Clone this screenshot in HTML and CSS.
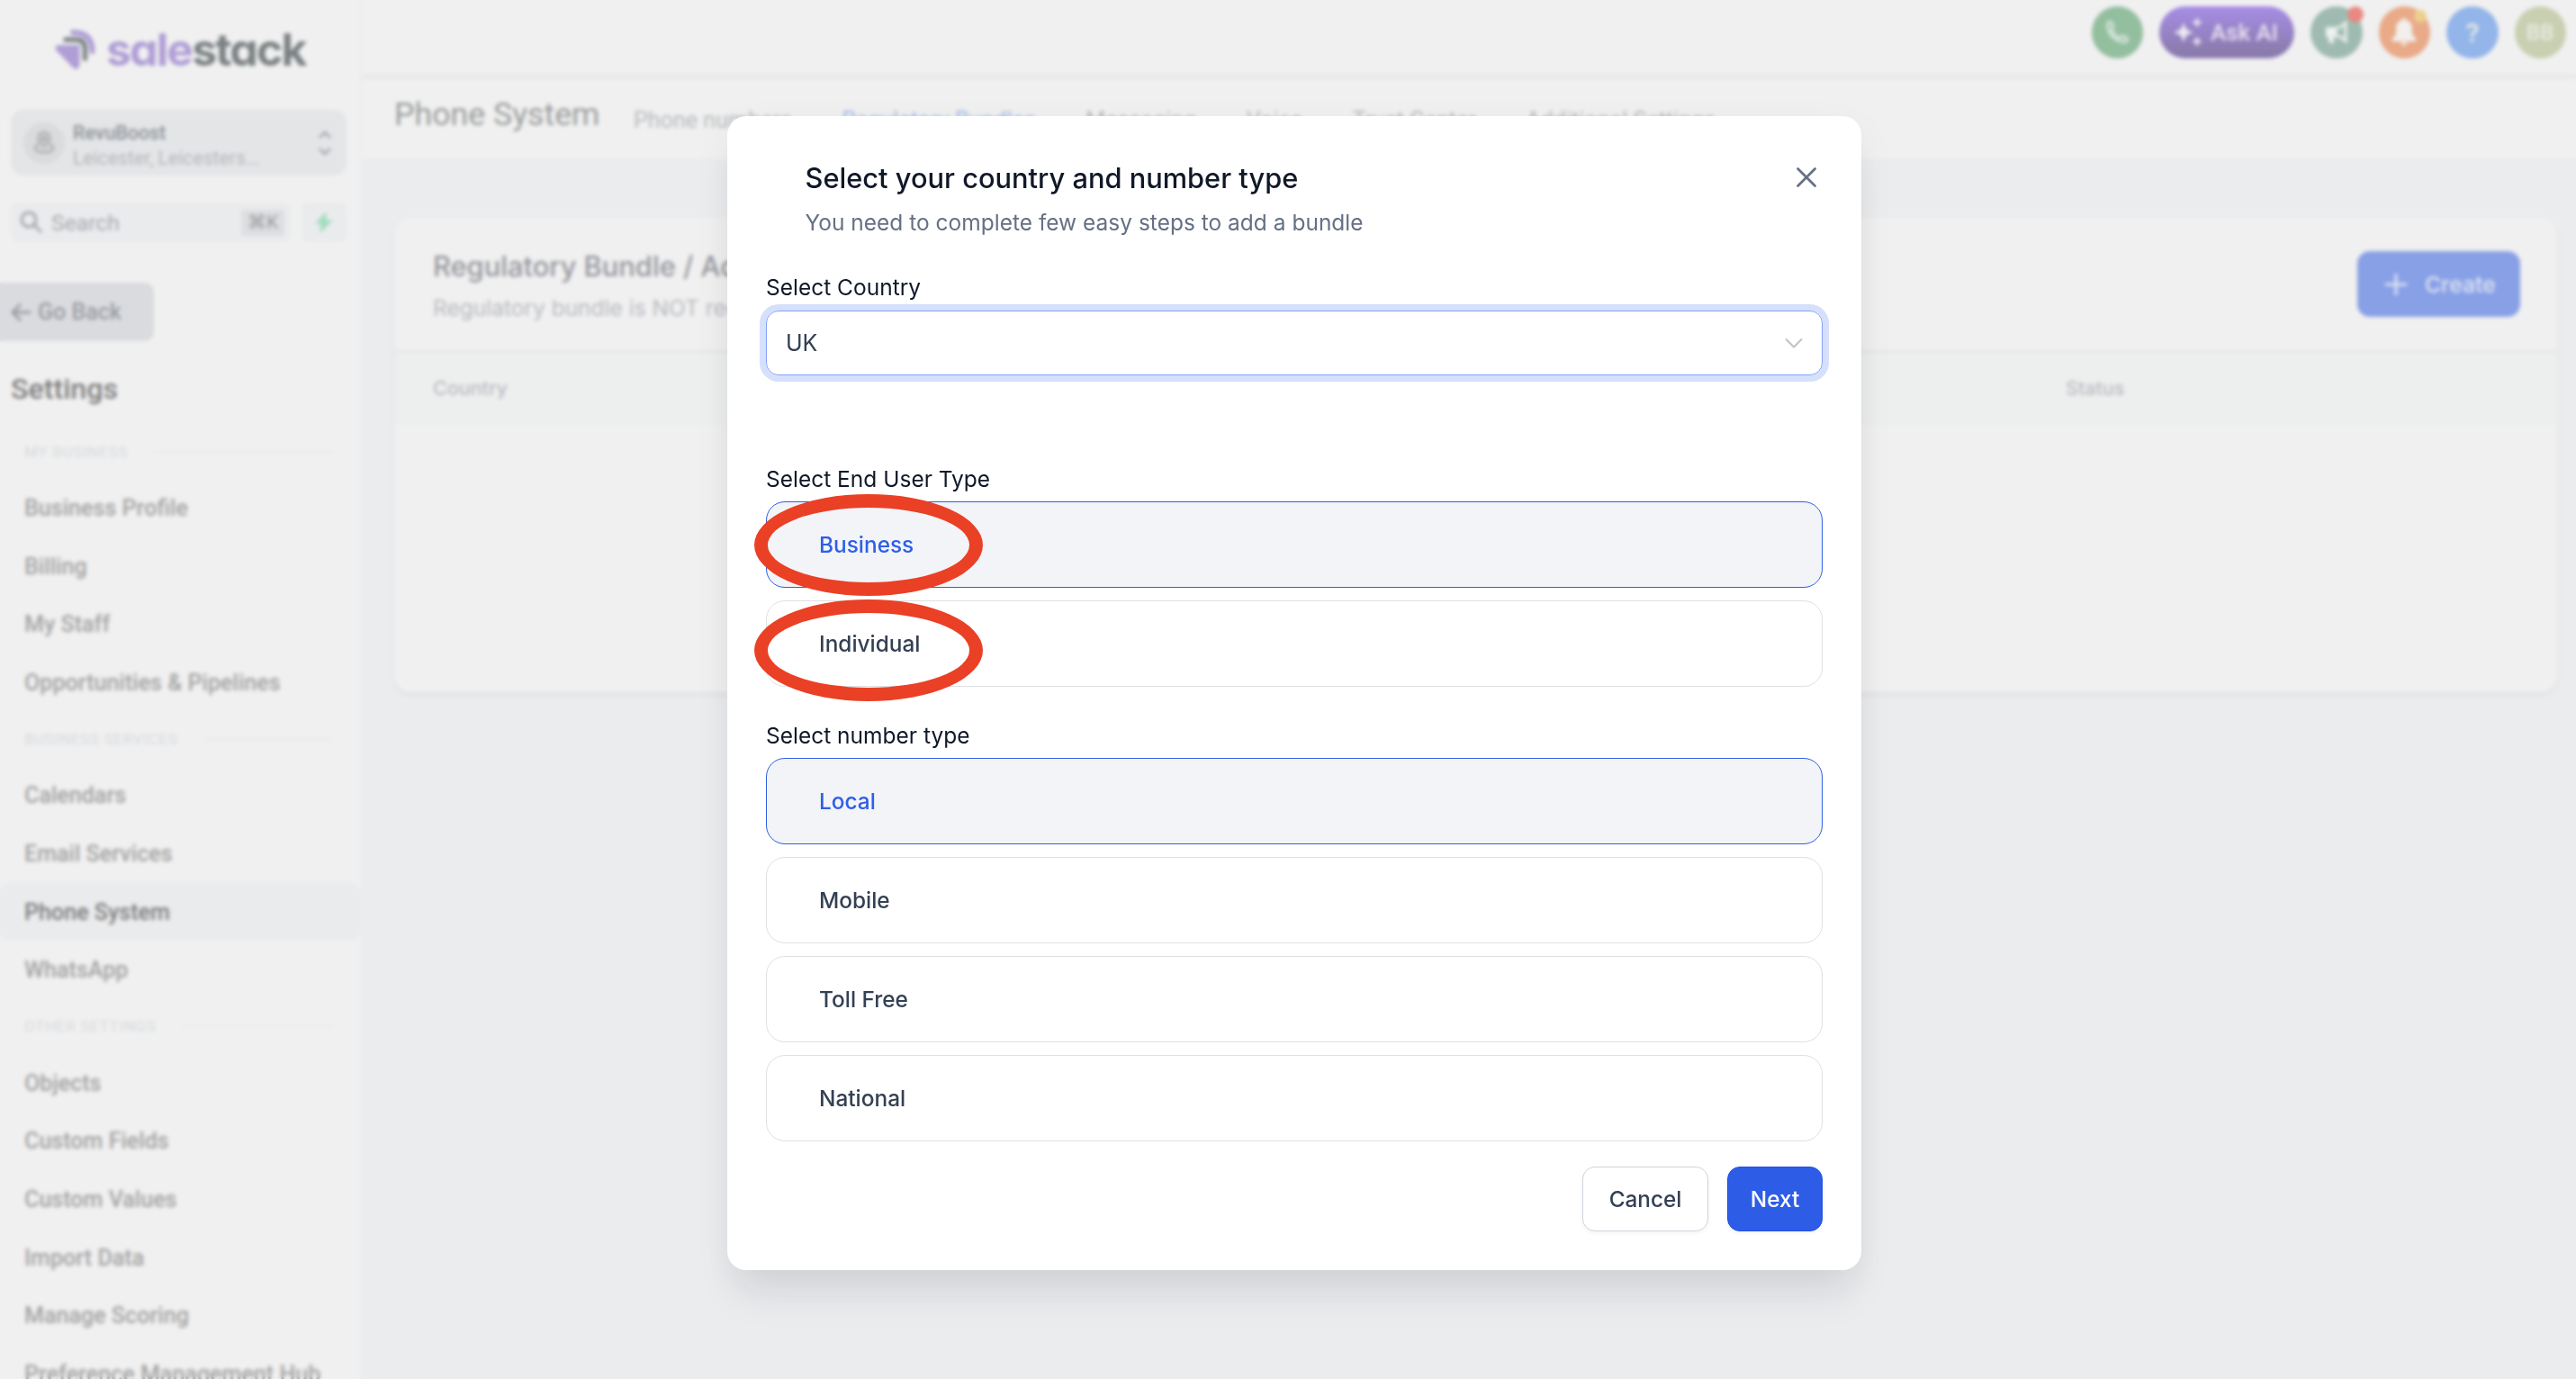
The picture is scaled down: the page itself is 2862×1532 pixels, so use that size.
FILE: index.html
```
<!DOCTYPE html>
<html lang="en">
<head>
    <meta charset="UTF-8">
    <meta name="viewport" content="width=device-width, initial-scale=1.0">
    <title>Phone System - Regulatory Bundles</title>
    <link rel="stylesheet" href="styles.css">
</head>
<body>
    <div class="app">
        <!-- Sidebar -->
        <aside class="sidebar">
            <div class="logo">
                <svg width="46" height="48" viewBox="0 0 46 48">
                    <path d="M3.500 20.500h22.500v21q-1 4-4.500 2L2.500 24q-1-2.500 1-3.500z" fill="#af9dd6" stroke="#af9dd6" stroke-width="3" stroke-linejoin="round"/>
                    <path d="M12 13h11q10.500 0 10.500 10.500v10.500" fill="none" stroke="#808688" stroke-width="5.500" stroke-linecap="round"/>
                    <path d="M20 5q21.500 0 21.500 21" fill="none" stroke="#af9dd6" stroke-width="6" stroke-linecap="round"/>
                </svg>
                <span class="logo-text">sale<b>stack</b></span>
            </div>

            <div class="account">
                <div class="account-icon">
                    <svg width="24" height="26" viewBox="0 0 24 26" fill="none" stroke="#a9a9a9" stroke-width="2.400">
                        <path d="M12 17c-4-4-6.500-6-6.500-9.500a6.500 6.500 0 0 1 13 0C18.500 11 16 13 12 17z"/>
                        <circle cx="12" cy="8" r="2"/>
                        <path d="M6 14.500c-6 2-6 8.500 6 8.500s12-6.500 6-8.500"/>
                    </svg>
                </div>
                <div class="account-info">
                    <div class="account-name">RevuBoost</div>
                    <div class="account-place">Leicester, Leicesters...</div>
                </div>
                <svg width="16" height="28" viewBox="0 0 16 28" fill="none" stroke="#a4a7ac" stroke-width="2.500">
                    <path d="M2 8l6-6 6 6M2 20l6 6 6-6"/>
                </svg>
            </div>

            <div class="search-row">
                <div class="search">
                    <svg width="26" height="26" viewBox="0 0 26 26" fill="none" stroke="#a3a6ad" stroke-width="3">
                        <circle cx="10" cy="10" r="8"/><path d="M16 16l8 8"/>
                    </svg>
                    <span>Search</span>
                    <kbd>⌘K</kbd>
                </div>
                <div class="bolt">
                    <svg width="20" height="24" viewBox="0 0 20 24"><path d="M12 1L1 13h6l-1 10L19 10h-7z" fill="#a3dcbf" stroke="#a3dcbf"/></svg>
                </div>
            </div>

            <div class="go-back">
                <svg width="22" height="20" viewBox="0 0 22 20" fill="none" stroke="#989ba1" stroke-width="3"><path d="M22 10H3M11 1l-9 9 9 9"/></svg>
                <span>Go Back</span>
            </div>

            <h2 class="settings-title">Settings</h2>
            <nav class="menu">
                <div class="menu-group">MY BUSINESS</div>
                <a>Business Profile</a>
                <a>Billing</a>
                <a>My Staff</a>
                <a>Opportunities &amp; Pipelines</a>
                <div class="menu-group">BUSINESS SERVICES</div>
                <a>Calendars</a>
                <a>Email Services</a>
                <a class="active">Phone System</a>
                <a>WhatsApp</a>
                <div class="menu-group">OTHER SETTINGS</div>
                <a>Objects</a>
                <a>Custom Fields</a>
                <a>Custom Values</a>
                <a>Import Data</a>
                <a>Manage Scoring</a>
                <a>Preference Management Hub</a>
            </nav>
        </aside>

        <main class="main">
            <!-- Top bar -->
            <header class="topbar">
                <div class="round green">
                    <svg width="28" height="28" viewBox="0 0 24 24" fill="none" stroke="#e6ede8" stroke-width="2"><path d="M3 4.500C3 3 4 2 5.500 2c1 0 1.500.5 1.900 1.500l1 2.700c.3.900.1 1.500-.5 2.100L6.800 9.500c1.400 3.400 4.200 6.200 7.700 7.700l1.200-1.100c.6-.6 1.300-.8 2.100-.5l2.700 1c1 .4 1.500 1 1.500 1.900 0 1.500-1 2.500-2.500 2.500C10.500 21 3 13.500 3 4.500z"/></svg>
                </div>
                <div class="ask-ai">
                    <svg width="32" height="36" viewBox="0 0 32 36" fill="#ebe8f2">
                        <path d="M11 8c1.500 6 4 8.500 10 10-6 1.500-8.500 4-10 10-1.500-6-4-8.500-10-10 6-1.500 8.500-4 10-10z" stroke="#ebe8f2"/>
                        <path d="M26 2c.8 3.200 1.800 4.200 5 5-3.200.8-4.200 1.800-5 5-.8-3.200-1.800-4.200-5-5 3.200-.8 4.200-1.800 5-5zM26 23c.8 3.200 1.800 4.200 5 5-3.200.8-4.200 1.800-5 5-.8-3.200-1.800-4.200-5-5 3.200-.8 4.200-1.800 5-5z" stroke="#ebe8f2"/>
                    </svg>
                    <span>Ask AI</span>
                </div>
                <div class="round teal">
                    <svg width="28" height="28" viewBox="0 0 28 28">
                        <path d="M2 8h11v11h-2v7H6l-1.500-7H2z" fill="#edf1ef"/>
                        <path d="M13 9.500q6-1 11-6v20q-5-5-11-6z" fill="none" stroke="#edf1ef" stroke-width="3"/>
                    </svg>
                    <i class="dot red"></i>
                </div>
                <div class="round orange">
                    <svg width="28" height="34" viewBox="0 0 28 34" fill="#f2efed"><path d="M14 1q2 0 2 2c5 1.500 7 5 7 10v6l4.500 6v2H.5v-2L5 19v-6c0-5 2-8.500 7-10q0-2 2-2zM10.500 28h7a3.500 3.500 0 0 1-7 0z"/></svg>
                    <i class="dot yellow"></i>
                </div>
                <div class="round blue">?</div>
                <div class="round olive">BB</div>
            </header>

            <div class="tabs-bar">
                <h1>Phone System</h1>
                <nav class="tabs">
                    <a>Phone numbers</a>
                    <a class="current">Regulatory Bundles</a>
                    <a>Messaging</a>
                    <a>Voice</a>
                    <a>Trust Center</a>
                    <a>Additional Settings</a>
                </nav>
            </div>

            <section class="card">
                <div class="card-head">
                    <div>
                        <h3>Regulatory Bundle / Address</h3>
                        <p>Regulatory bundle is NOT required</p>
                    </div>
                    <div class="create">
                        <svg width="24" height="24" viewBox="0 0 24 24" stroke="#dfe5f4" stroke-width="3"><path d="M12 0v24M0 12h24"/></svg>
                        <span>Create</span>
                    </div>
                </div>
                <div class="table-head">
                    <span>Country</span>
                    <span>Status</span>
                </div>
            </section>
        </main>
    </div>

    <!-- Modal -->
    <div class="overlay">
        <div class="modal">
            <div class="modal-head">
                <div>
                    <h2>Select your country and number type</h2>
                    <p>You need to complete few easy steps to add a bundle</p>
                </div>
                <svg class="close" width="24" height="24" viewBox="0 0 24 24" fill="none" stroke="#667085" stroke-width="2.800" stroke-linecap="round"><path d="M2.500 2.500l19 19M21.500 2.500l-19 19"/></svg>
            </div>

            <label class="label">Select Country</label>
            <div class="select">
                <span>UK</span>
                <svg width="20" height="12" viewBox="0 0 20 12" fill="none" stroke="#c2c2c2" stroke-width="2"><path d="M1 1.500l9 9 9-9"/></svg>
            </div>

            <label class="label">Select End User Type</label>
            <div class="options">
                <div class="option selected">Business</div>
                <div class="option">Individual</div>
            </div>

            <label class="label">Select number type</label>
            <div class="options">
                <div class="option selected">Local</div>
                <div class="option">Mobile</div>
                <div class="option">Toll Free</div>
                <div class="option">National</div>
            </div>

            <div class="actions">
                <button class="btn">Cancel</button>
                <button class="btn primary">Next</button>
            </div>

            <div class="ring ring-business"></div>
            <div class="ring ring-individual"></div>
        </div>
    </div>
</body>
</html>
```
FILE: styles.css
```
* {
    box-sizing: border-box;
}
body {
    margin: 0;
    height: 1532px;
    overflow: hidden;
    background-color: #ebecee;
    font-family: Inter, sans-serif;
}
h1, h2, h3, p {
    margin: 0;
}
svg {
    flex: none;
}
.app {
    display: flex;
    height: 1532px;
    overflow: hidden;
}

/* Sidebar */
.sidebar {
    width: 402px;
    flex: none;
    background: #f0f0f0;
    border-right: 2px solid #ecedef;
    font-family: Roboto, sans-serif;
}
.logo {
    display: flex;
    align-items: center;
    gap: 11px;
    height: 62px;
    margin: 24px 0 36px 61px;
}
.logo-text {
    font: 700 50px/60px Inter, sans-serif;
    font-feature-settings: "cv11";
    letter-spacing: -1.9px;
    color: #af9dd6;
}
.logo-text b {
    font-weight: 700;
    color: #7b8183;
}
.account {
    display: flex;
    align-items: center;
    height: 73px;
    margin: 0 15px 0 12px;
    padding: 0 16px 0 14px;
    border-radius: 14px;
    background: #e4e5e7;
}
.account-icon {
    display: flex;
    align-items: center;
    justify-content: center;
    width: 46px;
    height: 46px;
    border-radius: 50%;
    background: #dadbdc;
}
.account-info {
    flex: 1;
    margin-left: 9px;
    padding-top: 6px;
}
.account-name {
    font-weight: 500;
    font-size: 21.4px;
    line-height: 28px;
    color: #8d9197;
}
.account-place {
    font-size: 21.2px;
    line-height: 28px;
    color: #b5b8bd;
}
.search-row {
    display: flex;
    gap: 12px;
    margin: 30px 15px 45px 12px;
}
.search {
    flex: 1;
    display: flex;
    align-items: center;
    gap: 9px;
    height: 44px;
    padding: 0 7px 0 10px;
    border-radius: 8px;
    background: #eaebed;
    color: #a6a9af;
    font-size: 24.7px;
}
.search kbd {
    margin-left: auto;
    width: 48px;
    line-height: 29px;
    border-radius: 4px;
    background: #dddee2;
    color: #999;
    font-family: Roboto, "DejaVu Sans", sans-serif;
    font-size: 21px;
    text-align: center;
}
.bolt {
    display: flex;
    align-items: center;
    justify-content: center;
    width: 50px;
    border-radius: 8px;
    background: #eaebed;
}
.go-back {
    display: flex;
    align-items: center;
    gap: 8px;
    width: 171px;
    height: 65px;
    padding-left: 12px;
    border-radius: 0 11px 11px 0;
    background: #dadbdf;
    color: #989ba1;
    font-weight: 500;
    font-size: 25px;
}
.settings-title {
    margin: 31px 0 17px 12px;
    font-weight: 500;
    font-size: 32.2px;
    line-height: 44px;
    color: #7e7e7e;
}
.menu {
    display: flex;
    flex-direction: column;
}
.menu a {
    height: 64.6px;
    padding-left: 27px;
    border-radius: 10px;
    font-weight: 500;
    font-size: 25.1px;
    line-height: 66px;
    color: #a2a2a2;
}
.menu a.active {
    background: #eaebed;
    color: #7b7b7b;
}
.menu-group {
    display: flex;
    align-items: center;
    gap: 28px;
    height: 61px;
    padding: 0 30px 0 27px;
    font-size: 17px;
    letter-spacing: 0.7px;
    color: #d6d9de;
}
.menu-group::after {
    content: "";
    flex: 1;
    height: 2px;
    background: #e9eaeb;
}

/* Top bar */
.main {
    flex: 1;
    min-width: 0;
}
.topbar {
    display: flex;
    justify-content: flex-end;
    gap: 18px;
    height: 88px;
    padding: 7px 11px 0 0;
    background: #f0f0f0;
    border-bottom: 6px solid #e9e9e9;
}
.round {
    position: relative;
    display: flex;
    align-items: center;
    justify-content: center;
    width: 57.5px;
    height: 58px;
    border-radius: 50%;
    color: #e8ebe5;
    font: 500 24px Roboto, sans-serif;
}
.green { background: #93bf9f; }
.teal { background: #9fbbb1; }
.orange { background: #e9aa88; }
.blue { background: #93b5ea; font-size: 30px; }
.olive { background: #c9d0b1; }
.dot {
    position: absolute;
    border-radius: 50%;
}
.red {
    top: 0;
    right: -1px;
    width: 18px;
    height: 18px;
    background: #e98880;
}
.yellow {
    top: 4px;
    right: 4px;
    width: 14px;
    height: 14px;
    background: #ecd18c;
}
.ask-ai {
    display: flex;
    align-items: center;
    gap: 9px;
    width: 150px;
    height: 58px;
    padding-left: 16px;
    border-radius: 29px;
    background: linear-gradient(#a78de6, #8779a6);
    border-bottom: 1px solid #a78de6;
    color: #e4def0;
    font: 500 25.9px Roboto, sans-serif;
}
.tabs-bar {
    display: flex;
    height: 88px;
    padding-left: 36px;
    background: #f0f0f0;
    font-family: Roboto, sans-serif;
}
.tabs-bar h1 {
    width: 266px;
    font-weight: 400;
    font-size: 35.700px;
    line-height: 78px;
    color: #999b9c;
}
.tabs {
    display: flex;
    gap: 55.500px;
    font-size: 25.1px;
    line-height: 91px;
    color: #b7babd;
}
.tabs .current {
    color: #9dbaec;
}

/* Bundle list */
.card {
    height: 528px;
    margin: 65px 21px 0 36px;
    border-radius: 18px;
    background: #f0f0f0;
    box-shadow: 0 3px 6px rgba(16, 24, 40, 0.05);
    overflow: hidden;
}
.card-head {
    display: flex;
    justify-content: space-between;
    height: 151px;
    padding: 32px 41px 0 43px;
    border-bottom: 3px solid #e6e6e9;
}
.card-head h3 {
    font-weight: 500;
    font-size: 30.8px;
    line-height: 46px;
    color: #94969c;
}
.card-head p {
    font-size: 24.5px;
    line-height: 46px;
    color: #b8bac1;
}
.create {
    display: flex;
    align-items: center;
    gap: 20px;
    width: 181px;
    height: 73px;
    margin-top: 6px;
    padding-left: 31px;
    border-radius: 14px;
    background: #88a0e6;
    color: #dfe5f4;
    font-weight: 500;
    font-size: 24.7px;
}
.table-head {
    display: grid;
    grid-template-columns: 1814px 1fr;
    height: 79px;
    padding-left: 43px;
    background: #edefee;
    border-bottom: 2px solid #ececee;
    color: #b9bbc2;
    font-weight: 500;
    font-size: 21.5px;
    line-height: 78px;
}

/* Modal */
.overlay {
    position: fixed;
    inset: 0;
    padding: 129px 0 0 808px;
    backdrop-filter: blur(2px);
}
.modal {
    position: relative;
    width: 1260px;
    height: 1282px;
    padding: 47px 43px 0;
    border-radius: 21px;
    background: #fff;
    box-shadow: 0 36px 44px -8px rgba(16, 24, 40, 0.08), 0 14px 44px rgba(16, 24, 40, 0.05);
}
.modal-head {
    display: flex;
    justify-content: space-between;
    height: 126px;
    padding: 0 6px 0 43.500px;
}
.modal-head h2 {
    font-weight: 500;
    font-size: 30.8px;
    line-height: 44px;
    color: #101828;
}
.modal-head p {
    margin-top: 10px;
    font-size: 24.5px;
    line-height: 34px;
    color: #667085;
}
.close {
    margin-top: 9px;
}
.label {
    display: block;
    margin-bottom: 8px;
    font-size: 24.5px;
    line-height: 34px;
    color: #101828;
}
.select {
    display: flex;
    align-items: center;
    justify-content: space-between;
    height: 72px;
    margin: 9px 0 98px;
    padding: 0 21px;
    border: 1px solid #84a2f8;
    border-radius: 14px;
    box-shadow: 0 0 0 7px #d5e0fc;
    font-size: 25px;
    color: #344054;
}
.options {
    display: flex;
    flex-direction: column;
    gap: 14px;
    margin-bottom: 37px;
}
.option {
    height: 96px;
    padding-left: 58px;
    border: 1px solid #dfe0e4;
    border-radius: 21px;
    font-weight: 500;
    font-size: 24.4px;
    line-height: 94px;
    color: #344054;
}
.option.selected {
    background: #f2f4f8;
    border-color: #2f5fe6;
    color: #2f5fe6;
}
.actions {
    display: flex;
    justify-content: flex-end;
    gap: 21px;
    margin-top: -9px;
}
.btn {
    width: 140px;
    height: 72px;
    padding: 0;
    border: 1px solid #d0d5dd;
    border-radius: 14px;
    background: #fff;
    box-shadow: 0 2px 4px rgba(16, 24, 40, 0.05);
    font: 500 24.3px Inter, sans-serif;
    color: #344054;
}
.btn.primary {
    width: 106px;
    background: #2d5de7;
    border-color: #2150e0;
    color: #fff;
}

/* Red circles drawn around the end user types */
.ring {
    position: absolute;
    left: 30px;
    width: 254px;
    height: 113px;
    border: 15px solid #ea4025;
    border-radius: 50%;
}
.ring-business {
    top: 420px;
}
.ring-individual {
    top: 537px;
}
```
